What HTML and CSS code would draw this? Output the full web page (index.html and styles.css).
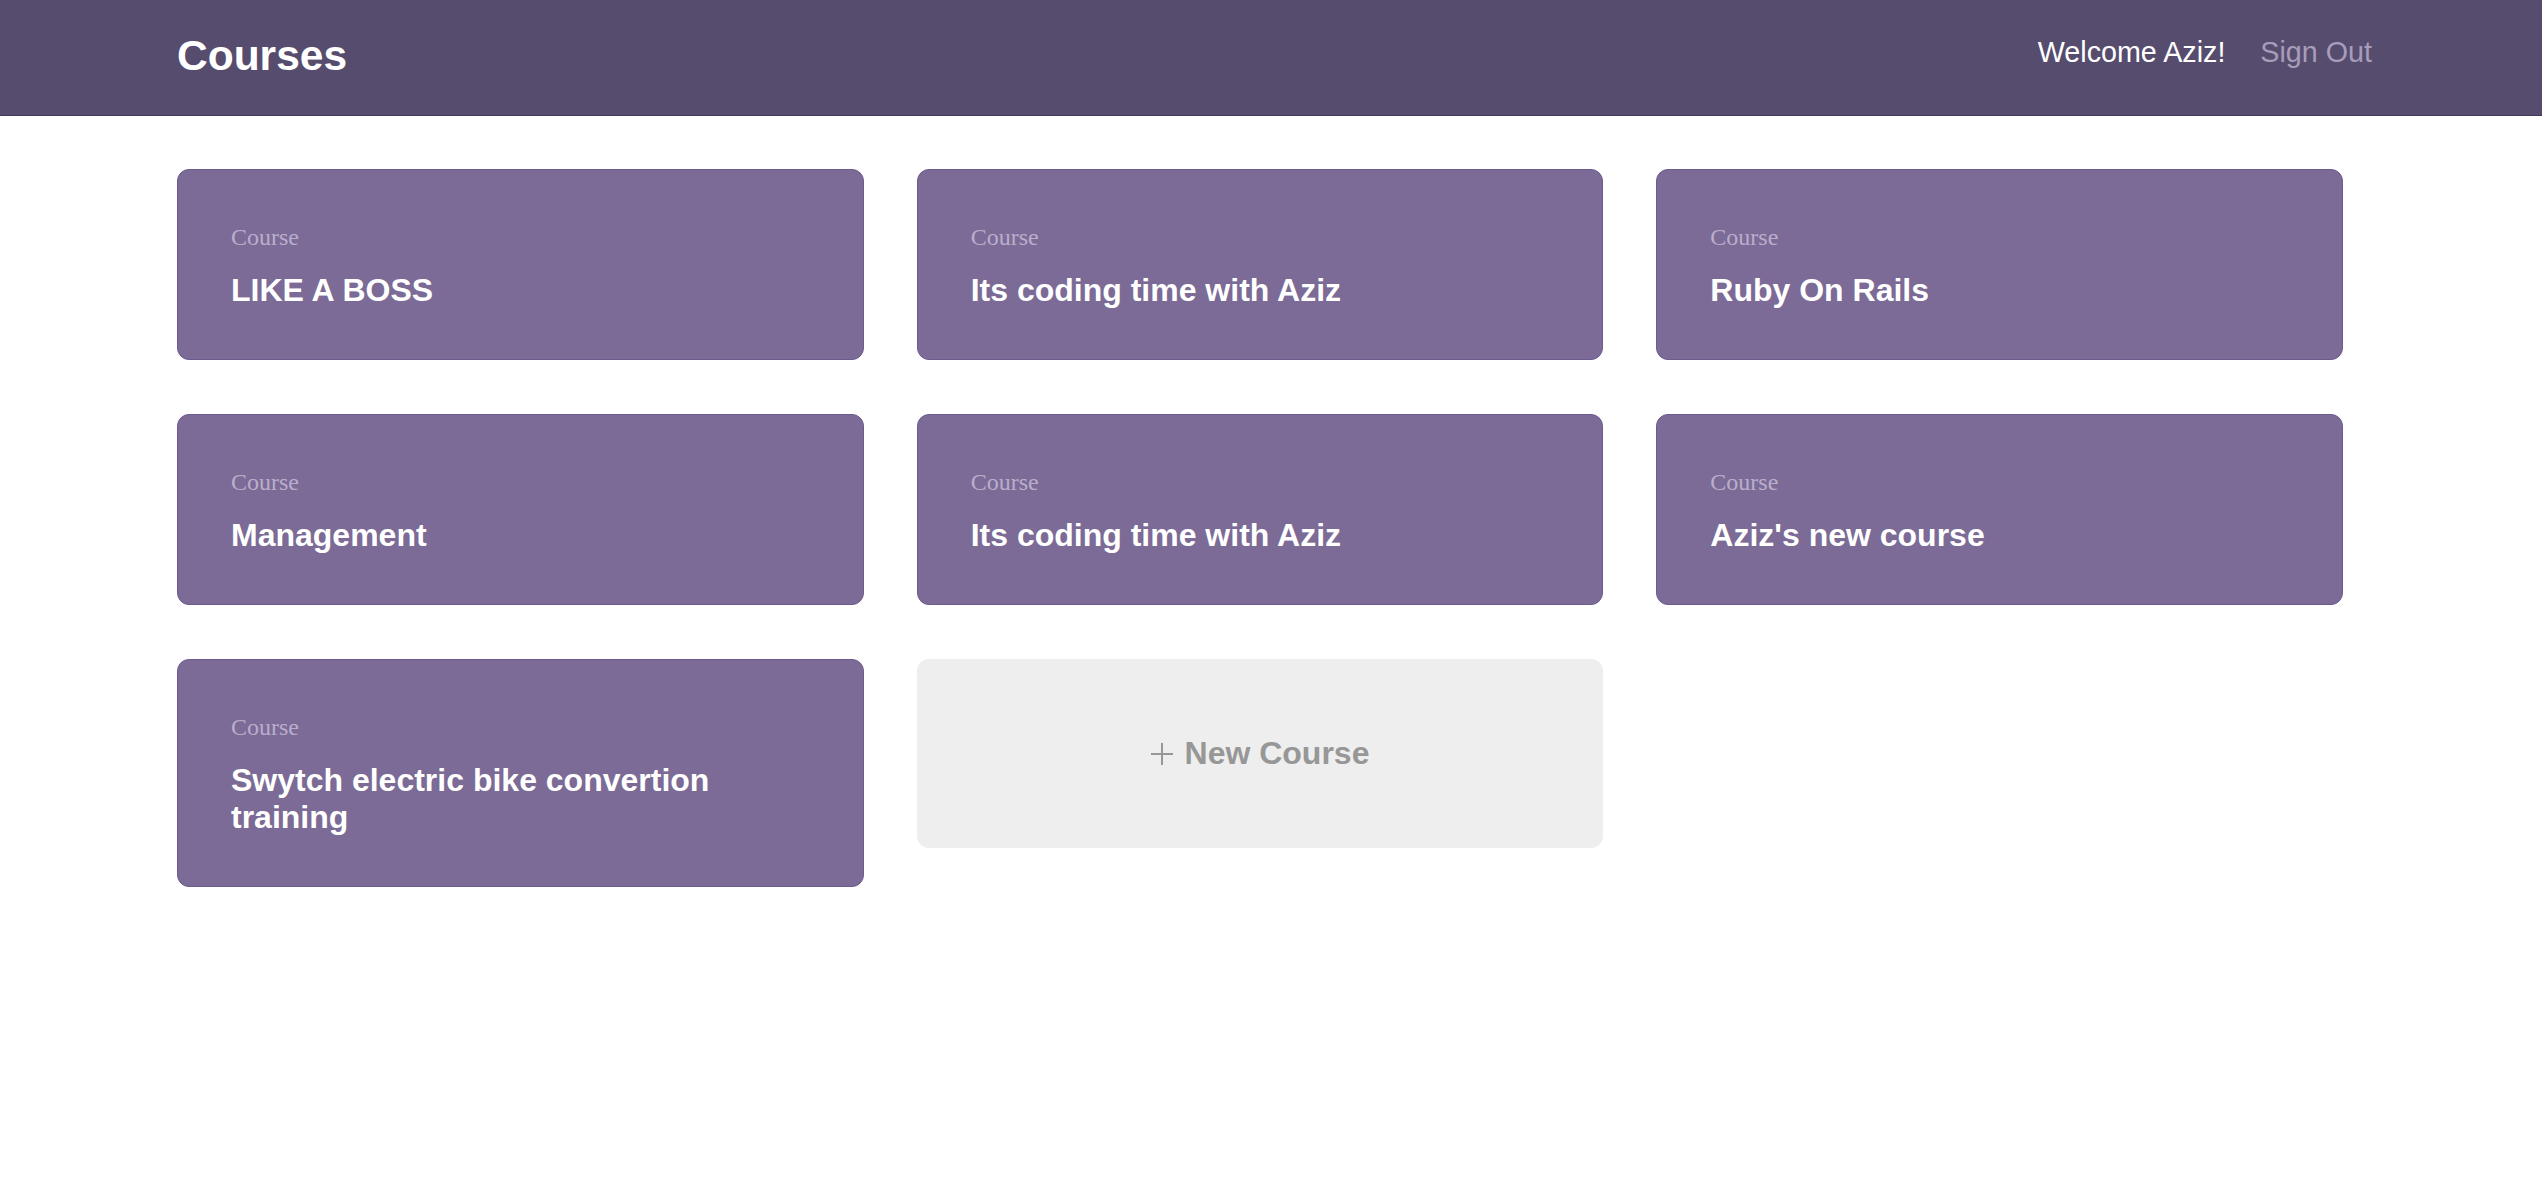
FILE: index.html
```html
<!DOCTYPE html>
<html lang="en">
<head>
<meta charset="utf-8">
<title>Courses</title>
<link rel="stylesheet" href="styles.css">
</head>
<body>
<header class="topbar">
  <h1 class="brand">Courses</h1>
  <nav class="user-nav">
    <span class="welcome">Welcome Aziz!</span>
    <a class="signout" href="#">Sign Out</a>
  </nav>
</header>
<main class="course-grid">
  <a class="course-card" href="#"><div class="course-label">Course</div><div class="course-title">LIKE A BOSS</div></a>
  <a class="course-card" href="#"><div class="course-label">Course</div><div class="course-title">Its coding time with Aziz</div></a>
  <a class="course-card" href="#"><div class="course-label">Course</div><div class="course-title">Ruby On Rails</div></a>
  <a class="course-card" href="#"><div class="course-label">Course</div><div class="course-title">Management</div></a>
  <a class="course-card" href="#"><div class="course-label">Course</div><div class="course-title">Its coding time with Aziz</div></a>
  <a class="course-card" href="#"><div class="course-label">Course</div><div class="course-title">Aziz's new course</div></a>
  <a class="course-card" href="#"><div class="course-label">Course</div><div class="course-title">Swytch electric bike convertion training</div></a>
  <a class="new-card" href="#">
    <svg class="plus" width="22" height="24" viewBox="0 0 22 24"><path d="M11 1V23M0 12H22" stroke="#979797" stroke-width="2" fill="none"/></svg>
    <span>New Course</span>
  </a>
</main>
</body>
</html>
```
FILE: styles.css
```css
* { box-sizing: border-box; }
html, body { margin: 0; padding: 0; background: #ffffff; }
body { font-family: "Liberation Sans", Arial, Helvetica, sans-serif; }

.topbar {
  display: flex;
  justify-content: space-between;
  align-items: flex-start;
  height: 116px;
  padding: 32px 170px 0 177px;
  background: #564c6e;
  border-bottom: 1px solid #43395a;
}
.brand {
  margin: 0;
  font-size: 42.5px;
  line-height: 48px;
  font-weight: bold;
  color: #ffffff;
}
.user-nav {
  display: flex;
  gap: 35px;
  margin-top: 4px;
  font-size: 28.7px;
  line-height: 32px;
}
.welcome { color: #ffffff; }
.signout { color: #a79dba; text-decoration: none; }

.course-grid {
  display: grid;
  grid-template-columns: repeat(3, 1fr);
  gap: 54px 53px;
  align-items: start;
  width: 2166px;
  margin: 53px 0 0 177px;
}
.course-card {
  display: block;
  padding: 53px 53px 50px;
  background: #7b6b96;
  border: 1px solid #6c5b8e;
  border-radius: 12px;
  text-decoration: none;
}
.course-label {
  font-family: "Liberation Serif", "Times New Roman", serif;
  font-size: 24px;
  line-height: 28px;
  color: #b9aecc;
  margin-bottom: 21px;
}
.course-title {
  font-size: 32px;
  line-height: 37px;
  font-weight: bold;
  color: #ffffff;
}
.new-card {
  display: flex;
  align-items: center;
  justify-content: center;
  gap: 12px;
  height: 189px;
  background: #eeeeee;
  border-radius: 12px;
  text-decoration: none;
  color: #979797;
  font-size: 32px;
  font-weight: bold;
  line-height: 37px;
}
.plus { display: block; }
```
